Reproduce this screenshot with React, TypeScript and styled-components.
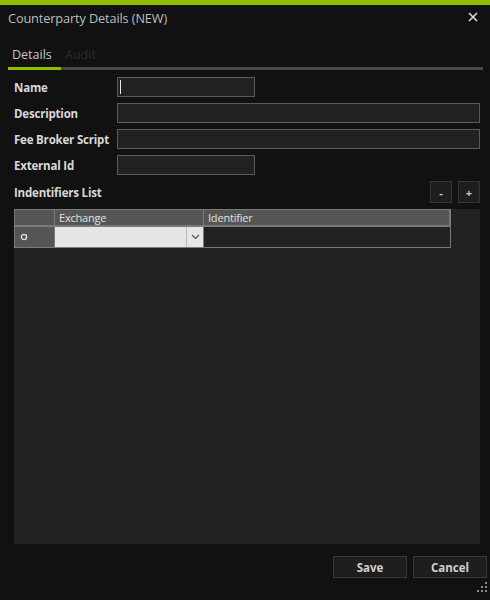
import styled, { createGlobalStyle } from 'styled-components';

const GlobalStyle = createGlobalStyle`
    html, body {
        margin: 0;
        padding: 0;
        background: #111111;
    }
    * {
        box-sizing: border-box;
    }
`;

const Window = styled.div`
    width: 490px;
    height: 600px;
    background: #111111;
    border-top: 5px solid #8fbe00;
    display: flex;
    flex-direction: column;
    font-family: "Open Sans", "Noto Sans", sans-serif;
    color: #d6d6d6;
    position: relative;
`;

const TitleBar = styled.div`
    height: 26px;
    display: flex;
    align-items: center;
    justify-content: space-between;
    padding: 0 11px 0 8px;
    font-size: 12.7px;
    color: #bdbdbd;
    letter-spacing: -0.1px;
`;

const CloseButton = styled.div`
    width: 12px;
    height: 12px;
    display: grid;
    place-content: center;
    margin-top: -2px;
`;

const Tabs = styled.div`
    margin: 17px 7px 0 8px;
    display: flex;
    align-items: flex-end;
    border-bottom: 3px solid #484848;
    height: 22px;
`;

const Tab = styled.div<{ $active?: boolean }>`
    padding: 0 4px 4px 4px;
    font-size: 12.5px;
    color: ${({ $active }) => ($active ? '#c8c8c8' : '#2c2c2c')};
    margin-bottom: -3px;
    border-bottom: 3px solid ${({ $active }) => ($active ? '#8fbe00' : 'transparent')};
    width: ${({ $active }) => ($active ? '53px' : 'auto')};
`;

const Form = styled.div`
    margin: 7px 0 0 14px;
    display: grid;
    grid-template-columns: 103px 1fr;
    row-gap: 6px;
    width: 466px;
`;

const Label = styled.div`
    font-size: 11.5px;
    font-weight: 700;
    color: #d8d8d8;
    height: 20px;
    display: flex;
    align-items: center;
    letter-spacing: -0.2px;
`;

const Input = styled.div<{ $short?: boolean }>`
    height: 20px;
    width: ${({ $short }) => ($short ? '138px' : '363px')};
    background: #222222;
    border: 1px solid #5a5a5a;
    display: flex;
    align-items: center;
    padding-left: 2px;
`;

const Caret = styled.span`
    width: 1px;
    height: 14px;
    background: #e8e8e8;
`;

const ListHeader = styled.div`
    margin: 6px 10px 0 14px;
    display: flex;
    align-items: center;
    justify-content: space-between;
    height: 22px;
`;

const SmallButtons = styled.div`
    display: flex;
    gap: 6px;
`;

const SmallButton = styled.div`
    width: 22px;
    height: 22px;
    background: #1e1e1e;
    border: 1px solid #353535;
    display: grid;
    place-content: center;
    font-size: 11px;
    font-weight: 700;
    color: #c8c8c8;
    line-height: 1;
`;

const GridPanel = styled.div`
    margin: 6px 10px 0 14px;
    height: 335px;
    background: #222222;
`;

const Table = styled.div`
    width: 437px;
    display: grid;
    grid-template-columns: 40px 149px 1fr;
    border: 1px solid #7a7a7a;
`;

const HeaderCell = styled.div`
    height: 17px;
    background: #555555;
    border-right: 1px solid #7a7a7a;
    border-bottom: 2px solid #7a7a7a;
    font-size: 11px;
    color: #e0e0e0;
    display: flex;
    align-items: center;
    padding-left: 4px;
    letter-spacing: -0.2px;
    &:last-child {
        border-right: none;
    }
`;

const RowHeader = styled.div`
    height: 20px;
    background: #555555;
    border-right: 1px solid #7a7a7a;
    display: flex;
    align-items: center;
    padding-left: 5px;
`;

const ComboCell = styled.div`
    height: 20px;
    background: #e6e6e6;
    border-right: 1px solid #7a7a7a;
    display: flex;
    justify-content: flex-end;
`;

const ComboArrow = styled.div`
    width: 17px;
    border-left: 1px solid #b8b8b8;
    display: grid;
    place-content: center;
`;

const TextCell = styled.div`
    height: 20px;
    background: #222222;
`;

const Footer = styled.div`
    margin: 12px 3px 0 0;
    display: flex;
    justify-content: flex-end;
    gap: 6px;
`;

const FooterButton = styled.div`
    width: 74px;
    height: 22px;
    background: #1e1e1e;
    border: 1px solid #3a3a3a;
    display: grid;
    place-content: center;
    font-size: 11.5px;
    font-weight: 700;
    color: #d0d0d0;
`;

const Grip = styled.div`
    position: absolute;
    right: 3px;
    bottom: 3px;
`;

const fields = [
    { label: 'Name', short: true, caret: true },
    { label: 'Description' },
    { label: 'Fee Broker Script' },
    { label: 'External Id', short: true },
];

const App = () => (
    <>
        <GlobalStyle />
        <Window>
            <TitleBar>
                <span>Counterparty Details (NEW)</span>
                <CloseButton>
                    <svg width="10" height="10" viewBox="0 0 10 10">
                        <path d="M1 1 L9 9 M9 1 L1 9" stroke="#d8dce4" strokeWidth="1.6" />
                    </svg>
                </CloseButton>
            </TitleBar>
            <Tabs>
                <Tab $active>Details</Tab>
                <Tab>Audit</Tab>
            </Tabs>
            <Form>
                {fields.map((field) => [
                    <Label key={field.label + '-l'}>{field.label}</Label>,
                    <Input key={field.label + '-i'} $short={field.short}>
                        {field.caret && <Caret />}
                    </Input>,
                ])}
            </Form>
            <ListHeader>
                <Label>Indentifiers List</Label>
                <SmallButtons>
                    <SmallButton>-</SmallButton>
                    <SmallButton>+</SmallButton>
                </SmallButtons>
            </ListHeader>
            <GridPanel>
                <Table>
                    <HeaderCell />
                    <HeaderCell>Exchange</HeaderCell>
                    <HeaderCell>Identifier</HeaderCell>
                    <RowHeader>
                        <svg width="8" height="8" viewBox="0 0 8 8">
                            <circle cx="4" cy="4" r="2.6" fill="none" stroke="#e0e0e0" strokeWidth="1.4" />
                        </svg>
                    </RowHeader>
                    <ComboCell>
                        <ComboArrow>
                            <svg width="9" height="6" viewBox="0 0 9 6">
                                <path d="M1 1 L4.5 4.5 L8 1" fill="none" stroke="#555" strokeWidth="1.2" />
                            </svg>
                        </ComboArrow>
                    </ComboCell>
                    <TextCell />
                </Table>
            </GridPanel>
            <Footer>
                <FooterButton>Save</FooterButton>
                <FooterButton>Cancel</FooterButton>
            </Footer>
            <Grip>
                <svg width="10" height="10" viewBox="0 0 10 10" fill="#8a8a8a">
                    <rect x="8" y="0" width="2" height="2" />
                    <rect x="4" y="4" width="2" height="2" />
                    <rect x="8" y="4" width="2" height="2" />
                    <rect x="0" y="8" width="2" height="2" />
                    <rect x="4" y="8" width="2" height="2" />
                    <rect x="8" y="8" width="2" height="2" />
                </svg>
            </Grip>
        </Window>
    </>
);

export default App;
